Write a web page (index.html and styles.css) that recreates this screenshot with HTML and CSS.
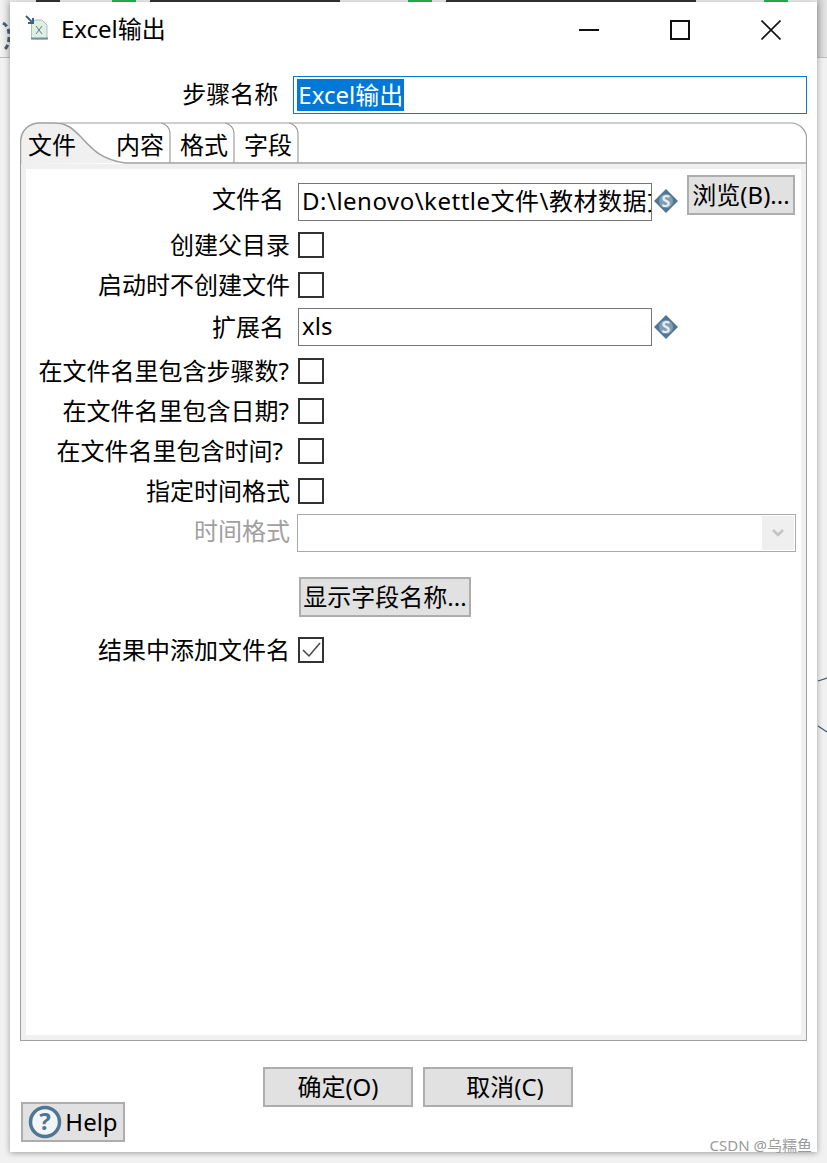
FILE: index.html
```html
<!DOCTYPE html>
<html lang="zh-CN">

<head>
    <meta charset="UTF-8">
    <title>Excel输出</title>
    <link rel="stylesheet" href="styles.css">
</head>

<body>
    <!-- bits of the app behind the dialog -->
    <div class="backdrop">
        <span class="side side-left"></span>
        <span class="side side-right"></span>
        <span class="bit bit-dark" style="left: 36px; width: 24px"></span>
        <span class="bit bit-green" style="left: 112px; width: 24px"></span>
        <span class="bit bit-dark" style="left: 150px; width: 190px"></span>
        <span class="bit bit-green" style="left: 408px; width: 24px"></span>
        <span class="bit bit-dark" style="left: 446px; width: 250px"></span>
        <span class="bit bit-green" style="left: 764px; width: 24px"></span>
        <svg class="left-mark" width="10" height="34" viewBox="0 0 10 34">
            <path d="M3 3 C8 6 9 10 9 16 C9 24 7 28 3 31" fill="none" stroke="#4a5f73" stroke-width="3" stroke-dasharray="5 3" />
        </svg>
        <svg class="right-lines" width="10" height="70" viewBox="0 0 10 70">
            <path d="M1 4 L10 1 M1 49 L10 55" fill="none" stroke="#3c5a74" stroke-width="1.2" />
        </svg>
    </div>

    <div class="dialog">
        <div class="titlebar">
            <svg class="title-icon" width="28" height="28" viewBox="0 0 28 28">
                <path d="M6.5 8 L10 5 H17 L22 10 V24 H6.5 Z" fill="#dff0e2" stroke="#a9c1c4" stroke-width="1" />
                <path d="M6 23.5 H23" stroke="#6f8fa3" stroke-width="2" />
                <path d="M11 11 L17 19 M17 11 L11 19" stroke="#5f7d92" stroke-width="1" />
                <path d="M1 1 L8 8 M8 3 V8 H3" fill="none" stroke="#3e6384" stroke-width="2" />
            </svg>
            <span class="title-text">Excel输出</span>
            <div class="window-buttons">
                <svg width="20" height="20" viewBox="0 0 20 20">
                    <path d="M0 10 H20" stroke="#111" stroke-width="2" />
                </svg>
                <svg width="20" height="20" viewBox="0 0 20 20">
                    <rect x="1" y="1" width="18" height="18" fill="none" stroke="#111" stroke-width="2" />
                </svg>
                <svg width="20" height="20" viewBox="0 0 20 20">
                    <path d="M0.5 0.5 L19.5 19.5 M19.5 0.5 L0.5 19.5" stroke="#111" stroke-width="1.6" />
                </svg>
            </div>
        </div>

        <div class="step-row">
            <label class="step-label">步骤名称</label>
            <div class="step-input"><span class="selected">Excel输出</span></div>
        </div>

        <div class="tabfolder">
            <div class="tabs">
                <svg class="tabs-outline" width="787" height="42" viewBox="0 0 787 42">
                    <path d="M1 42 V20 C1 8 9 1 20 1 H35 C46 1 52 6 60 14 C72 27 80 37 105 41 L0 42 Z" fill="#f0f0f0" />
                    <path d="M0.5 42 V20 C1 8 9 1 20 1 H35 C46 1 52 6 60 14 C72 27 80 37 105 41 H787" fill="none" stroke="#a0a0a0" stroke-width="1.5" />
                    <path d="M40 1 H772 C780 2 786 8 786.5 15 V42" fill="none" stroke="#a0a0a0" stroke-width="1.2" />
                    <path d="M141 1 C146 2 150 6 150 11 V41 M205 1 C210 2 214 6 214 11 V41 M269 1 C274 2 278 6 278 11 V41" fill="none" stroke="#a0a0a0" stroke-width="1.2" />
                </svg>
                <span class="tab tab-first">文件</span>
                <span class="tab tab-second">内容</span>
                <span class="tab">格式</span>
                <span class="tab">字段</span>
            </div>

            <div class="panel">
                <div class="row row-file">
                    <label class="label label-file">文件名</label>
                    <div class="text-input file-input">D:\lenovo\kettle文件\教材数据文件</div>
                    <svg class="var-icon" width="26" height="26" viewBox="0 0 26 26">
                        <path d="M13 1 L25 13 L13 25 L1 13 Z" fill="#4f7794" />
                        <circle cx="13" cy="13" r="7" fill="#7f9db3" />
                        <text class="var-letter" x="13" y="18.5">S</text>
                    </svg>
                    <button class="btn btn-browse" type="button">浏览(B)...</button>
                </div>
                <div class="row row-check">
                    <label class="label">创建父目录</label>
                    <span class="checkbox"></span>
                </div>
                <div class="row row-check">
                    <label class="label">启动时不创建文件</label>
                    <span class="checkbox"></span>
                </div>
                <div class="row row-ext">
                    <label class="label label-ext">扩展名</label>
                    <div class="text-input ext-input">xls</div>
                    <svg class="var-icon" width="26" height="26" viewBox="0 0 26 26">
                        <path d="M13 1 L25 13 L13 25 L1 13 Z" fill="#4f7794" />
                        <circle cx="13" cy="13" r="7" fill="#7f9db3" />
                        <text class="var-letter" x="13" y="18.5">S</text>
                    </svg>
                </div>
                <div class="row row-check row-check-tall">
                    <label class="label label-steps">在文件名里包含步骤数?</label>
                    <span class="checkbox"></span>
                </div>
                <div class="row row-check">
                    <label class="label label-steps">在文件名里包含日期?</label>
                    <span class="checkbox"></span>
                </div>
                <div class="row row-check">
                    <label class="label label-time">在文件名里包含时间?</label>
                    <span class="checkbox"></span>
                </div>
                <div class="row row-check">
                    <label class="label">指定时间格式</label>
                    <span class="checkbox"></span>
                </div>
                <div class="row row-combo">
                    <label class="label label-disabled">时间格式</label>
                    <div class="combo">
                        <span class="combo-arrow">
                            <svg width="14" height="10" viewBox="0 0 14 10">
                                <path d="M2 2 L7 7 L12 2" fill="none" stroke="#c4c4c4" stroke-width="2.5" />
                            </svg>
                        </span>
                    </div>
                </div>
                <div class="row row-show">
                    <button class="btn btn-show" type="button">显示字段名称...</button>
                </div>
                <div class="row row-check row-result">
                    <label class="label">结果中添加文件名</label>
                    <span class="checkbox">
                        <svg width="20" height="18" viewBox="0 0 20 18">
                            <path d="M2 9 L8 15 L19 2" fill="none" stroke="#444" stroke-width="1.5" />
                        </svg>
                    </span>
                </div>
            </div>
        </div>

        <div class="footer">
            <button class="btn btn-help" type="button">
                <svg width="34" height="34" viewBox="0 0 34 34">
                    <circle cx="17" cy="17" r="14.5" fill="#f2f6f8" stroke="#4f7794" stroke-width="3.5" />
                    <text class="help-mark" x="17" y="25">?</text>
                </svg>
                Help
            </button>
            <div class="footer-buttons">
                <button class="btn btn-footer" type="button">确定(O)</button>
                <button class="btn btn-footer btn-cancel" type="button">取消(C)</button>
            </div>
        </div>

        <div class="watermark">CSDN @乌糯鱼</div>
    </div>
</body>

</html>
```

FILE: styles.css
```css
* {
    box-sizing: border-box;
}

html,
body {
    height: 100%;
}

body {
    position: relative;
    margin: 0;
    padding: 2px 10px 0;
    overflow: hidden;
    background-color: #f1f1f1;
    color: #000;
    font-family: "Noto Sans", "Noto Sans CJK SC", sans-serif;
    font-size: 24px;
    line-height: 32px;
}

/* things behind the window */
.backdrop {
    position: absolute;
    top: 0;
    left: 0;
    width: 827px;
    height: 1163px;
}

.side {
    position: absolute;
    top: 0;
    width: 10px;
    height: 58px;
    border-bottom: 1px solid #bcbcbc;
}

.side-left {
    left: 0;
    background: linear-gradient(to right, #f4f4f4, #dcdcdc);
}

.side-right {
    left: 817px;
    background: linear-gradient(to right, #c8c8c8, #e6e6e6);
}

.bit {
    position: absolute;
    top: 0;
    height: 2px;
}

.bit-dark {
    background-color: #333;
}

.bit-green {
    background-color: #2fb457;
}

.left-mark {
    position: absolute;
    top: 20px;
    left: 0;
}

.right-lines {
    position: absolute;
    top: 677px;
    left: 817px;
}

.dialog {
    position: relative;
    width: 807px;
    height: 1150px;
    padding: 0 10px;
    background-color: #fff;
    box-shadow: 0 1px 6px rgba(0, 0, 0, 0.35);
}

.titlebar {
    display: flex;
    align-items: center;
    height: 54px;
}

.title-icon {
    margin: 0 8px 0 5px;
}

.title-text {
    flex: 1;
}

.window-buttons {
    display: flex;
    gap: 71px;
    margin-right: 26px;
    padding-top: 2px;
}

.step-row {
    display: flex;
    align-items: center;
    height: 38px;
    margin-top: 20px;
}

.step-label {
    width: 259px;
    padding-bottom: 3px;
    text-align: right;
}

.step-input {
    display: flex;
    align-items: center;
    width: 515px;
    height: 38px;
    margin-left: 15px;
    padding-left: 3px;
    border: 1px solid #0078d7;
}

.selected {
    padding: 0 1px;
    background-color: #0078d7;
    color: #fff;
}

.tabfolder {
    width: 787px;
    height: 919px;
    margin-top: 8px;
}

.tabs {
    position: relative;
    display: flex;
    height: 42px;
}

.tabs-outline {
    position: absolute;
    top: 0;
    left: 0;
}

.tab {
    position: relative;
    width: 48px;
    margin-right: 16px;
    padding-top: 7px;
    white-space: nowrap;
}

.tab-first {
    margin-left: 8px;
    margin-right: 40px;
}

.panel {
    height: 877px;
    border: 1px solid #a0a0a0;
    border-top: none;
    padding: 4px 5px 0;
    background-color: #fff;
    box-shadow: inset 0 0 0 5px #f0f0f0;
}

.row {
    display: flex;
    align-items: center;
}

.label {
    width: 264px;
    flex-shrink: 0;
    text-align: right;
    white-space: nowrap;
}

.label-file,
.label-ext {
    width: 258px;
    margin-right: 14px;
}

.label-steps {
    width: 263px;
    margin-right: 1px;
}

.label-time {
    width: 257px;
    margin-right: 7px;
}

.label-disabled {
    padding-bottom: 5px;
    color: #a0a0a0;
}

.row-file {
    align-items: flex-start;
    height: 57px;
    padding-top: 7px;
}

.text-input {
    height: 38px;
    padding: 1px 3px;
    border: 1px solid #767676;
    overflow: hidden;
    white-space: nowrap;
}

.file-input {
    width: 354px;
    margin-top: 8px;
    letter-spacing: 0.5px;
}

.row-file .var-icon {
    margin-top: 13px;
}

.label-file {
    margin-top: 8px;
}

.ext-input {
    width: 354px;
}

.var-icon {
    flex-shrink: 0;
    margin-left: 1px;
}

.var-letter {
    fill: #e4edf2;
    font-size: 16px;
    font-weight: 700;
    text-anchor: middle;
}

.help-mark {
    fill: #4f7794;
    font-size: 24px;
    font-weight: 700;
    text-anchor: middle;
}

.btn {
    display: inline-flex;
    align-items: center;
    justify-content: center;
    height: 40px;
    padding: 0;
    border: 2px solid #adadad;
    background-color: #e1e1e1;
    color: #000;
    font: inherit;
    white-space: nowrap;
}

.btn-browse {
    width: 108px;
    margin-left: 8px;
}

.row-check {
    height: 40px;
}

.row-check .checkbox {
    margin-left: 8px;
}

.row-check-tall {
    height: 42px;
    padding-top: 2px;
}

.row-ext {
    height: 44px;
}

.checkbox {
    display: flex;
    align-items: center;
    justify-content: center;
    width: 26px;
    height: 26px;
    border: 2px solid #333;
    background-color: #fff;
}

.row-combo {
    height: 44px;
}

.combo {
    display: flex;
    justify-content: flex-end;
    width: 499px;
    height: 38px;
    margin-left: 7px;
    padding: 1px;
    border: 1px solid #a9a9b0;
}

.combo-arrow {
    display: flex;
    align-items: center;
    justify-content: center;
    width: 32px;
    background-color: #efefef;
}

.row-show {
    margin-top: 22px;
    padding-left: 273px;
}

.btn-show {
    width: 172px;
}

.row-result {
    margin-top: 13px;
}

.footer {
    position: relative;
    height: 110px;
}

.footer-buttons {
    display: flex;
    justify-content: center;
    gap: 10px;
    padding-top: 26px;
    padding-left: 9px;
}

.btn-footer {
    width: 150px;
}

.btn-cancel {
    padding-left: 14px;
}

.btn-help {
    position: absolute;
    top: 61px;
    left: 1px;
    gap: 3px;
    width: 104px;
}

.watermark {
    position: absolute;
    right: 5px;
    bottom: -3px;
    color: #9a9a9a;
    font-size: 15px;
    line-height: 20px;
}
```
